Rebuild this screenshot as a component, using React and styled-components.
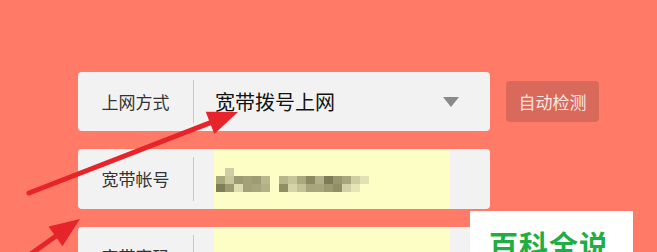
import styled, { createGlobalStyle } from "styled-components";

const GlobalStyle = createGlobalStyle`
  html, body {
    margin: 0;
    padding: 0;
    background: #ff7b68;
  }
  body {
    font-family: "Noto Sans CJK SC", "Liberation Sans", sans-serif;
  }
`;

const Page = styled.div`
  position: relative;
  width: 657px;
  height: 252px;
  overflow: hidden;
  background: #ff7b68;
  padding: 72px 0 0 78px;
  box-sizing: border-box;
`;

const Form = styled.div`
  display: flex;
  flex-direction: column;
  gap: 18px;
`;

const Line = styled.div`
  display: flex;
  align-items: center;
  gap: 16px;
`;

const Field = styled.div`
  display: flex;
  align-items: stretch;
  width: 412px;
  height: ${(p) => p.h || 59}px;
  background: #f3f2f3;
  border-radius: 4px;
  flex-shrink: 0;
`;

const Label = styled.div`
  width: 115px;
  display: flex;
  align-items: center;
  justify-content: center;
  font-size: 17px;
  color: #333;
  border-right: 1px solid #c9c9c9;
  margin: 8px 0;
  padding-bottom: 1px;
`;

const Value = styled.div`
  flex: 1;
  display: flex;
  align-items: center;
  padding: 0 31px 0 21px;
  font-size: 20px;
  color: #111;
  justify-content: space-between;
`;

const Filled = styled.div`
  margin-left: 20px;
  width: 234px;
  background: #fdfdc6;
  display: flex;
  align-items: center;
  padding-left: 2px;
`;

const Caret = styled.span`
  width: 0;
  height: 0;
  border-left: 8.5px solid transparent;
  border-right: 8.5px solid transparent;
  border-top: 10px solid #8a8a8a;
`;

const Detect = styled.button`
  width: 93px;
  height: 41px;
  border: none;
  border-radius: 4px;
  background: #d9695b;
  color: #f8e6e2;
  font-family: inherit;
  font-size: 17px;
  padding: 0;
`;

const Mosaic = styled.div`
  display: grid;
  grid-template-columns: repeat(18, 9px);
  grid-auto-rows: 8px;
  margin-top: 1px;
  filter: blur(0.6px);
`;

const Cell = styled.span`
  background: ${(p) => p.c};
`;

const Watermark = styled.div`
  position: absolute;
  left: 470px;
  top: 211px;
  width: 163px;
  height: 60px;
  background: #fff;
  box-sizing: border-box;
  padding: 12px 0 0 19px;
  color: #1fae43;
  font-size: 29px;
  font-weight: 700;
  letter-spacing: 1px;
`;

const Overlay = styled.svg`
  position: absolute;
  left: 0;
  top: 0;
  pointer-events: none;
`;

const Y = "#fdfdc6";
const rowA = [
  Y, "#cfcea2", Y, Y, Y, Y, Y, Y, Y,
  Y, Y, Y, Y, Y, Y, Y, Y, Y,
];
const rowB = [
  "#a9a87d", "#c8c79b", "#9b9a70", "#a2a177", "#9d9c72", "#b9b88d", Y, "#b7b68b", "#c6c599",
  "#a9a87e", "#8a8962", "#b0af85", "#7c7b56", "#97966d", "#a7a67c", "#cfcea2", "#e2e1b5", Y,
];
const rowC = [
  "#7f7e58", "#9b9a71", "#dedcb1", "#a2a178", "#a6a57b", "#b1b086", Y, "#8f8e65", "#d5d4a8",
  "#c3c297", "#a6a57b", "#a7a67c", "#9b9a71", "#8f8e66", "#d3d2a6", "#e6e5b8", Y, Y,
];

function Arrow({ x1, y1, x2, y2 }) {
  const dx = x2 - x1;
  const dy = y2 - y1;
  const len = Math.hypot(dx, dy);
  const ux = dx / len;
  const uy = dy / len;
  const hl = 30;
  const hw = 12;
  const bx = x2 - ux * hl;
  const by = y2 - uy * hl;
  const pts = `${x2},${y2} ${bx - uy * hw},${by + ux * hw} ${bx + uy * hw},${by - ux * hw}`;
  return (
    <g>
      <line x1={x1} y1={y1} x2={bx + ux * 4} y2={by + uy * 4} stroke="#e8242b" strokeWidth="5" strokeLinecap="round" />
      <polygon points={pts} fill="#e8242b" />
    </g>
  );
}

export default function App() {
  return (
    <Page>
      <GlobalStyle />
      <Form>
        <Line>
          <Field>
            <Label>上网方式</Label>
            <Value>
              宽带拨号上网
              <Caret />
            </Value>
          </Field>
          <Detect>自动检测</Detect>
        </Line>
        <Field h={60}>
          <Label>宽带帐号</Label>
          <Filled>
            <Mosaic>
              {[rowA, rowB, rowC].map((r, i) =>
                r.map((c, j) => <Cell key={`${i}-${j}`} c={c} />)
              )}
            </Mosaic>
          </Filled>
        </Field>
        <Field>
          <Label>宽带密码</Label>
          <Filled />
        </Field>
      </Form>
      <Watermark>百科全说</Watermark>
      <Overlay width="657" height="252" viewBox="0 0 657 252">
        <Arrow x1={29} y1={193} x2={238} y2={112} />
        <Arrow x1={28} y1={256} x2={80} y2={219} />
      </Overlay>
    </Page>
  );
}
